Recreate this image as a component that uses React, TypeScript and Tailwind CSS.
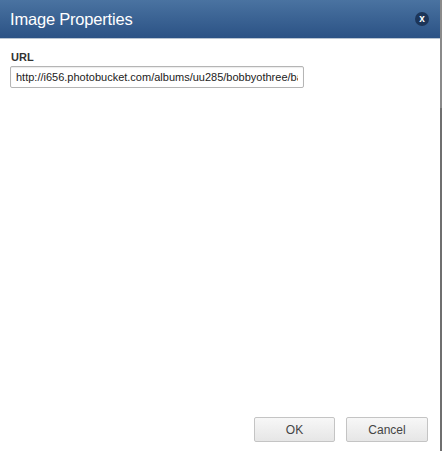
export default function App() {
  return (
    <div className="flex h-[451px] w-[442px] bg-white font-['Liberation_Sans',Arial,sans-serif]">
      <div className="flex w-[440px] flex-col">
        <div className="flex h-[39px] items-center justify-between border-b border-[#b8c4d2] bg-gradient-to-b from-[#4a73a1] to-[#2b5285] pl-[10px] pr-[11px]">
          <span className="mt-px text-[16.5px] leading-none tracking-[-0.2px] text-white">Image Properties</span>
          <button className="flex h-[14px] w-[14px] items-center justify-center rounded-full bg-[#1c3559] text-[10px] font-bold leading-none text-white">
            x
          </button>
        </div>
        <div className="flex flex-1 flex-col px-[10px] pt-[11px]">
          <label className="pl-px text-[11px] font-bold leading-[14px] text-[#333]">URL</label>
          <input
            readOnly
            value="http://i656.photobucket.com/albums/uu285/bobbyothree/background.jpg"
            className="mt-[2px] h-[22px] w-[294px] rounded-[2px] border border-[#b5b5b5] px-[5px] text-[11px] text-[#222] shadow-[inset_0_1px_1px_rgba(0,0,0,0.08)] outline-none"
          />
        </div>
        <div className="flex justify-end gap-[11px] pb-[9px] pr-[12px]">
          <button className="h-[25px] w-[81px] rounded-[2px] border border-[#c4c4c4] bg-gradient-to-b from-[#f7f7f7] to-[#e6e6e6] text-[12px] text-[#444]">
            OK
          </button>
          <button className="h-[25px] w-[82px] rounded-[2px] border border-[#c4c4c4] bg-gradient-to-b from-[#f7f7f7] to-[#e6e6e6] text-[12px] text-[#444]">
            Cancel
          </button>
        </div>
      </div>
      <div className="flex w-[2px] flex-col">
        <div className="h-[108px] bg-[#8a8a8a]" />
        <div className="flex-1 bg-[#6f6f6f]" />
      </div>
    </div>
  );
}
